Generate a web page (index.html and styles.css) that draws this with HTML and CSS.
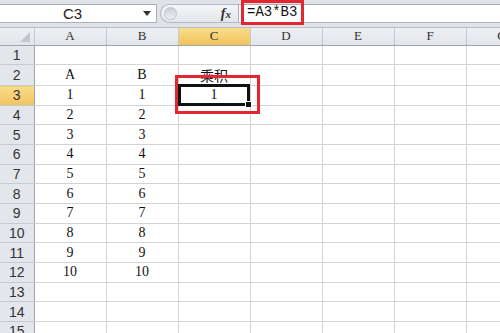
FILE: index.html
```html
<!DOCTYPE html>
<html lang="zh-CN">
<head>
  <meta charset="UTF-8" />
  <title>乘积 - Excel</title>
  <link rel="stylesheet" href="styles.css">
</head>
<body>

  <div class="toolbar">
    <div class="name-box">
      <span class="name">C3</span>
      <span class="caret"></span>
    </div>
    <div class="grip">
      <span class="knob"></span>
      <span class="fx"><i>f</i><small>x</small></span>
    </div>
    <div class="formula"><span class="mark">=A3*B3</span></div>
  </div>

  <table class="sheet">
    <colgroup>
      <col class="rh"><col><col><col><col><col><col><col>
    </colgroup>
    <tr class="head"><th class="corner"><span class="tri"></span></th><th>A</th><th>B</th><th class="on">C</th><th>D</th><th>E</th><th>F</th><th>G</th></tr>
    <tr><th>1</th><td></td><td></td><td></td><td></td><td></td><td></td><td></td></tr>
    <tr><th>2</th><td>A</td><td>B</td><td class="cjk">乘积</td><td></td><td></td><td></td><td></td></tr>
    <tr><th class="on">3</th><td>1</td><td>1</td><td class="sel"><span class="ring"></span>1</td><td></td><td></td><td></td><td></td></tr>
    <tr><th>4</th><td>2</td><td>2</td><td></td><td></td><td></td><td></td><td></td></tr>
    <tr><th>5</th><td>3</td><td>3</td><td></td><td></td><td></td><td></td><td></td></tr>
    <tr><th>6</th><td>4</td><td>4</td><td></td><td></td><td></td><td></td><td></td></tr>
    <tr><th>7</th><td>5</td><td>5</td><td></td><td></td><td></td><td></td><td></td></tr>
    <tr><th>8</th><td>6</td><td>6</td><td></td><td></td><td></td><td></td><td></td></tr>
    <tr><th>9</th><td>7</td><td>7</td><td></td><td></td><td></td><td></td><td></td></tr>
    <tr><th>10</th><td>8</td><td>8</td><td></td><td></td><td></td><td></td><td></td></tr>
    <tr><th>11</th><td>9</td><td>9</td><td></td><td></td><td></td><td></td><td></td></tr>
    <tr><th>12</th><td>10</td><td>10</td><td></td><td></td><td></td><td></td><td></td></tr>
    <tr><th>13</th><td></td><td></td><td></td><td></td><td></td><td></td><td></td></tr>
    <tr><th>14</th><td></td><td></td><td></td><td></td><td></td><td></td><td></td></tr>
    <tr><th>15</th><td></td><td></td><td></td><td></td><td></td><td></td><td></td></tr>
  </table>

</body>
</html>
```

FILE: styles.css
```css
body {
  margin: 0;
  width: 500px;
  height: 333px;
  overflow: hidden;
  background: #fff;
  font-family: 'Liberation Serif', 'Noto Sans CJK SC', serif;
  color: #111;
}

/* formula bar */
.toolbar {
  height: 28px;
  box-sizing: border-box;
  padding: 4px 0 4px 0;
  display: flex;
  background: #dfe3e8;
  border-bottom: 1px solid #b9bfc7;
}
.name-box {
  width: 157px;
  height: 19px;
  box-sizing: border-box;
  background: #fff;
  border-top: 1px solid #a9b0b8;
  border-bottom: 1px solid #a9b0b8;
  border-right: 1px solid #a9b0b8;
  display: flex;
  align-items: center;
  position: relative;
}
.name {
  flex: 1;
  text-align: center;
  padding-left: 2px;
  font-family: 'Liberation Sans', sans-serif;
  font-size: 15px;
  color: #222;
}
.caret {
  width: 0;
  height: 0;
  margin-right: 5px;
  border-left: 4px solid transparent;
  border-right: 4px solid transparent;
  border-top: 5px solid #333;
}
.grip {
  margin-left: 3px;
  width: 78px;
  height: 19px;
  box-sizing: border-box;
  border: 1px solid #b3bac3;
  border-right: none;
  border-radius: 10px 0 0 10px;
  background: linear-gradient(#f4f5f7, #e3e6ea);
  display: flex;
  align-items: center;
  justify-content: space-between;
}
.knob {
  width: 11px;
  height: 11px;
  margin-left: 3px;
  border-radius: 50%;
  background: linear-gradient(#c9cdd3, #eef0f2);
  border: 1px solid #c2c7ce;
}
.fx {
  margin-right: 7px;
  font-family: 'Liberation Serif', serif;
  font-weight: bold;
  font-size: 14px;
  color: #333;
}
.fx small { font-size: 11px; font-style: italic; }
.formula {
  flex: 1;
  height: 19px;
  box-sizing: border-box;
  background: #fff;
  border: 1px solid #a9b0b8;
  border-right: none;
  display: flex;
  align-items: center;
}
.mark {
  margin-left: 2px;
  height: 25px;
  margin-top: -2px;
  padding: 0 4px 0 3px;
  box-sizing: border-box;
  border: 3px solid #e3262f;
  font-family: 'Liberation Mono', monospace;
  font-size: 14px;
  line-height: 19px;
  color: #111;
}

/* grid */
.sheet {
  border-collapse: collapse;
  table-layout: fixed;
  width: 538px;
}
.sheet col { width: 72px; }
.sheet col.rh { width: 34px; }
.sheet tr { height: 19.67px; }
.sheet tr.head { height: 17px; }
.sheet th, .sheet td {
  padding: 0;
  box-sizing: border-box;
  text-align: center;
  font-weight: normal;
}
.sheet td {
  border-right: 1px solid #d4d4d4;
  border-bottom: 1px solid #d4d4d4;
  font-size: 14px;
}
.sheet th {
  background: #e3e6eb;
  color: #333;
  font-family: 'Liberation Sans', sans-serif;
  font-size: 14px;
  border-right: 1px solid #9ea6b0;
  border-bottom: 1px solid #c5cad1;
}
.sheet tr.head th {
  font-family: 'Liberation Serif', serif;
  font-size: 13px;
  background: linear-gradient(#eef0f3, #e1e4e9);
  border-right: 1px solid #c5cad1;
  border-bottom: 1px solid #9ea6b0;
}
.sheet th.on, .sheet tr.head th.on {
  background: linear-gradient(#f9dc8a, #f1c35e);
  color: #333;
}
.corner { position: relative; }
.tri {
  position: absolute;
  right: 4px;
  bottom: 3px;
  width: 0;
  height: 0;
  border-left: 10px solid transparent;
  border-bottom: 10px solid #c2c7ce;
}
.cjk {
  font-family: 'Noto Sans CJK SC', sans-serif;
  font-size: 13px;
}
.sel { position: relative; }
.ring {
  position: absolute;
  left: -1px;
  top: -2px;
  right: 0;
  bottom: -1px;
  border: 3px solid #111;
}
.ring::after {
  content: "";
  position: absolute;
  right: -5px;
  bottom: -5px;
  width: 5px;
  height: 5px;
  background: #111;
  border: 1px solid #fff;
}
.sel::before {
  content: "";
  position: absolute;
  left: -4px;
  top: -11px;
  right: -10px;
  bottom: -9px;
  border: 3px solid #e3262f;
}
```
